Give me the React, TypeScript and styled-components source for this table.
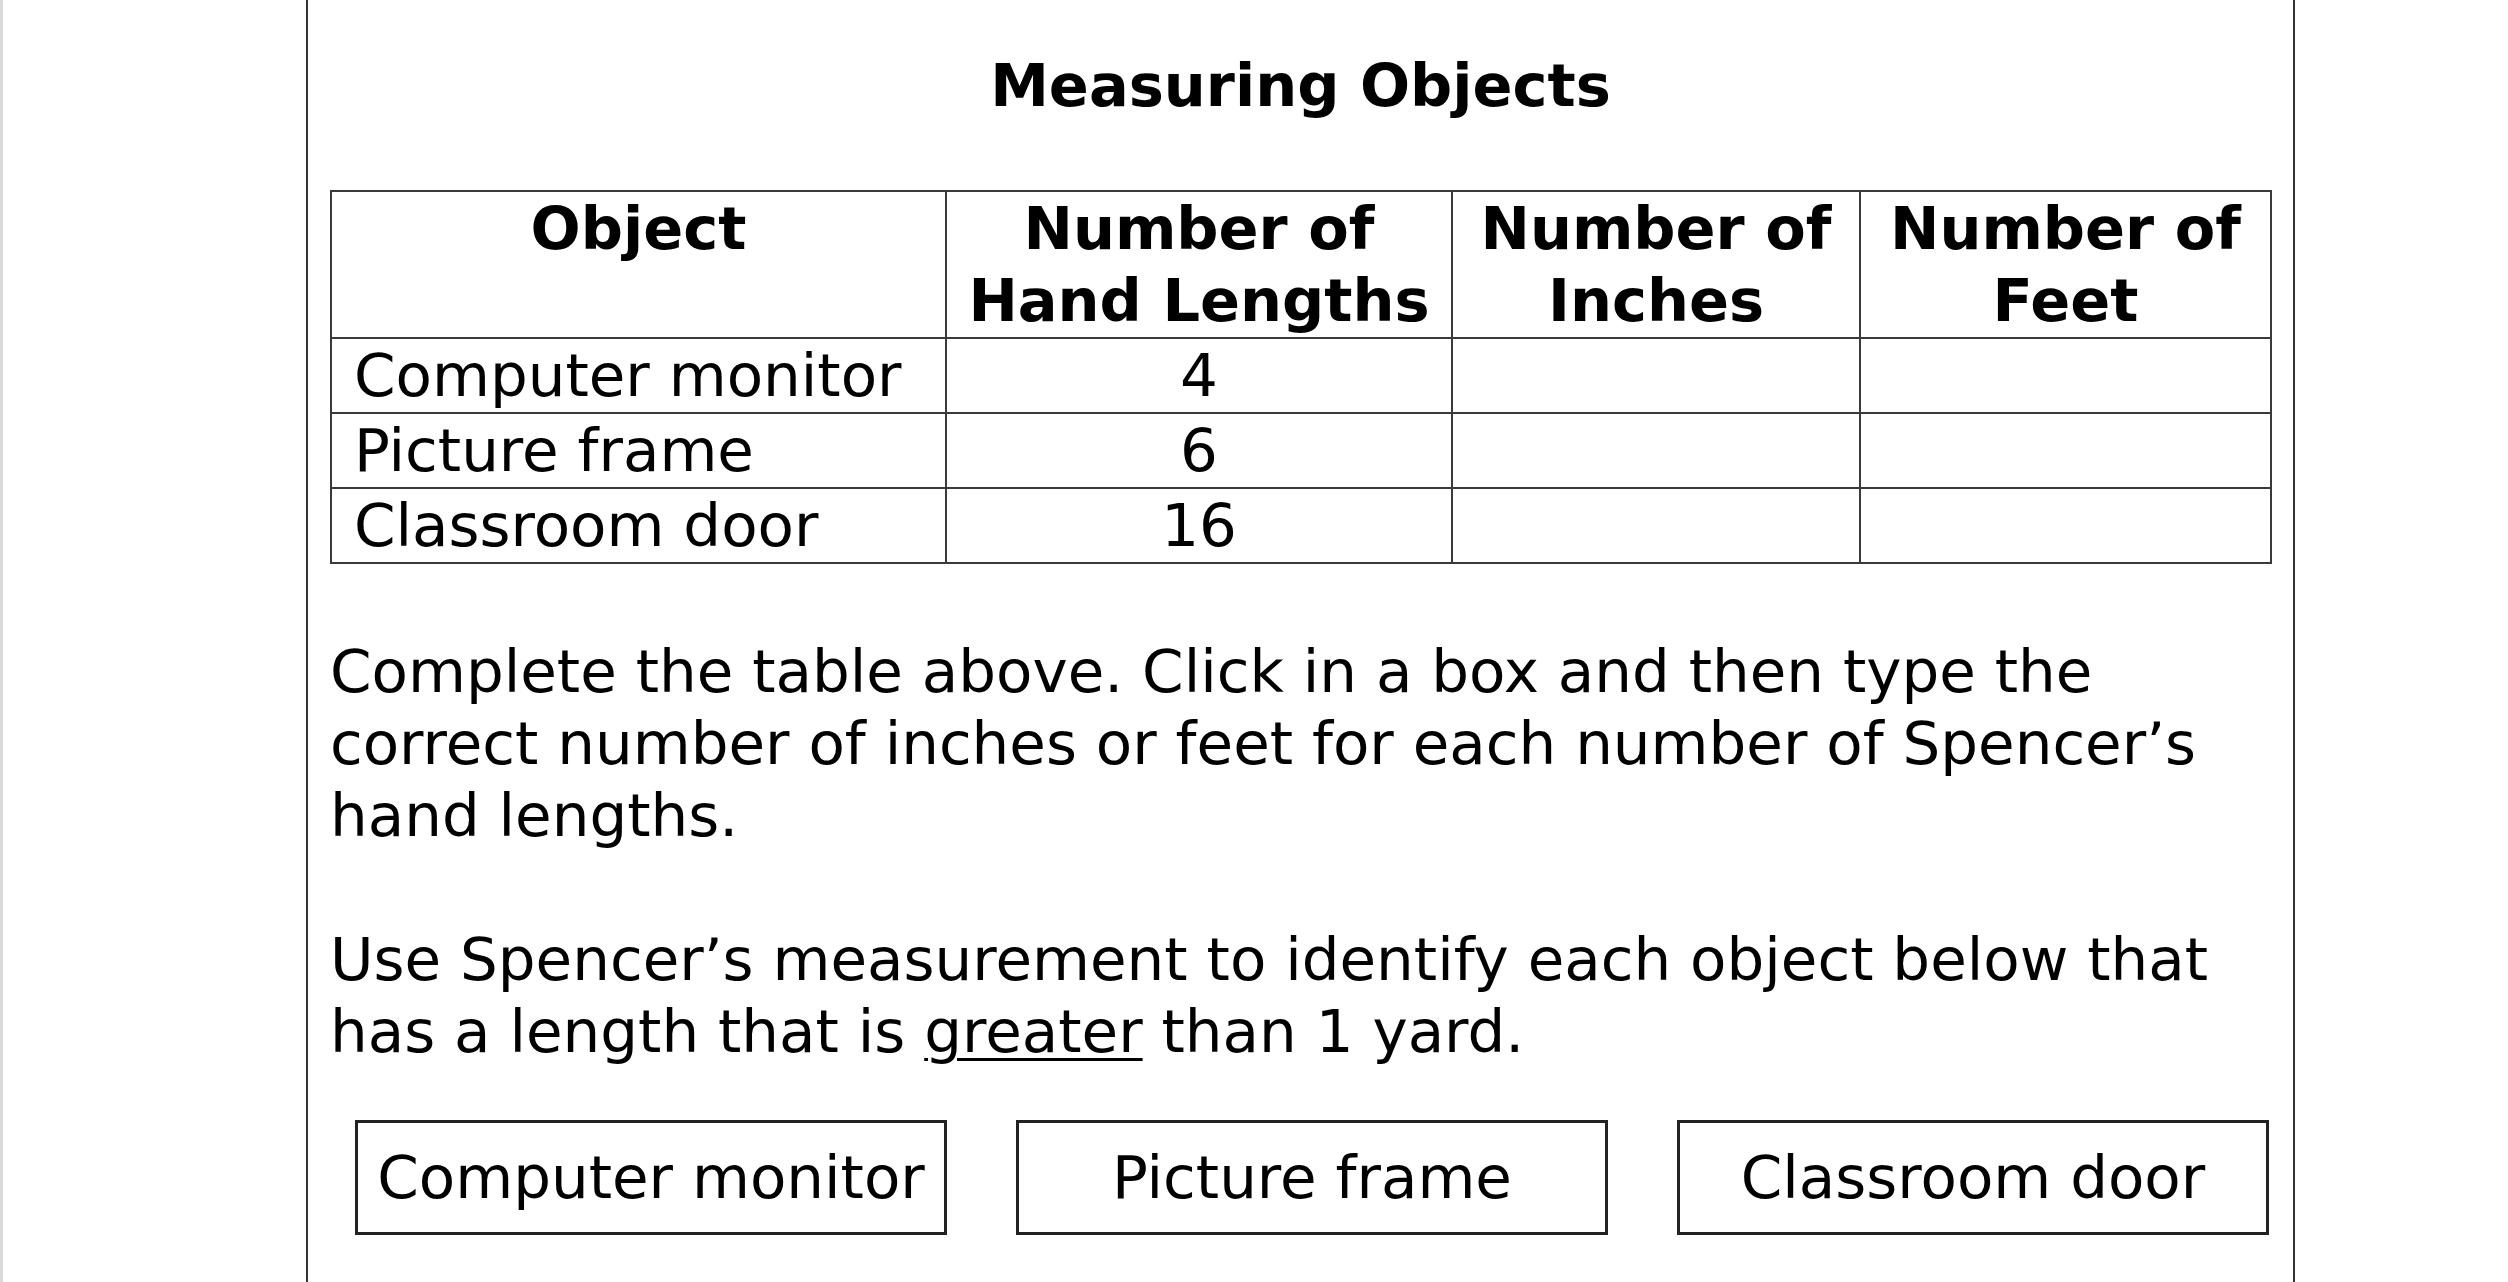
import React from 'react';
import styled, { createGlobalStyle } from 'styled-components';

const GlobalStyle = createGlobalStyle`
  html, body {
    margin: 0;
    padding: 0;
    background: #fff;
  }
  body {
    font-family: "DejaVu Sans", Verdana, sans-serif;
    color: #000;
  }
`;

// page frame: light strip on the far left, bordered panel in the middle
const Page = styled.div`
  display: flex;
  min-height: 1282px;
  border-left: 3px solid #dadada;
  box-sizing: border-box;
`;

const Panel = styled.main`
  margin-left: 303px;
  width: 1989px;
  border-left: 2px solid #333;
  border-right: 2px solid #333;
  padding: 50px 22px 0 22px;
  box-sizing: border-box;
`;

const Title = styled.h1`
  margin: 0 0 68px 0;
  font-size: 59px;
  line-height: 72px;
  font-weight: bold;
  text-align: center;
`;

const Table = styled.table`
  width: 1940px;
  border-collapse: collapse;
  table-layout: fixed;
  font-size: 59.5px;
  line-height: 72px;
  border: 2px solid #3a3a3a;
`;

const HeadCell = styled.th`
  border: 2px solid #3a3a3a;
  padding: 1px 0 0;
  font-size: 59px;
  font-weight: bold;
  text-align: center;
  vertical-align: top;
`;

const Cell = styled.td<{ $center?: boolean }>`
  border: 2px solid #3a3a3a;
  padding: 1px ${(p) => (p.$center ? '0' : '22px')} 0;
  text-align: ${(p) => (p.$center ? 'center' : 'left')};
  white-space: nowrap;
`;

const Para = styled.p<{ $top: number }>`
  margin: ${(p) => p.$top}px 0 0 0;
  font-size: 59.5px;
  line-height: 72px;
`;

const Under = styled.span`
  text-decoration: underline;
  text-decoration-thickness: 3px;
  text-underline-offset: 6px;
`;

const Choices = styled.div`
  display: flex;
  gap: 69px;
  margin: 52px 0 0 25px;
`;

const Choice = styled.button`
  width: 592px;
  height: 115px;
  box-sizing: border-box;
  border: 3px solid #222;
  background: #fff;
  font-family: "DejaVu Sans", Verdana, sans-serif;
  font-size: 59.5px;
  color: #000;
  padding: 0;
  display: flex;
  align-items: center;
  justify-content: center;
  white-space: nowrap;
  cursor: pointer;
`;

const rows = [
  { name: 'Computer monitor', hands: '4' },
  { name: 'Picture frame', hands: '6' },
  { name: 'Classroom door', hands: '16' },
];

const App: React.FC = () => {
  return (
    <>
      <GlobalStyle />
      <Page>
        <Panel>
          <Title>Measuring Objects</Title>
          <Table>
            <colgroup>
              <col style={{ width: 615 }} />
              <col style={{ width: 506 }} />
              <col style={{ width: 408 }} />
              <col style={{ width: 411 }} />
            </colgroup>
            <thead>
              <tr>
                <HeadCell>Object</HeadCell>
                <HeadCell>
                  Number of
                  <br />
                  Hand Lengths
                </HeadCell>
                <HeadCell>
                  Number of
                  <br />
                  Inches
                </HeadCell>
                <HeadCell>
                  Number of
                  <br />
                  Feet
                </HeadCell>
              </tr>
            </thead>
            <tbody>
              {rows.map((r) => (
                <tr key={r.name}>
                  <Cell>{r.name}</Cell>
                  <Cell $center>{r.hands}</Cell>
                  <Cell />
                  <Cell />
                </tr>
              ))}
            </tbody>
          </Table>
          <Para $top={72}>
            Complete the table above. Click in a box and then type the correct number of
            inches or feet for each number of Spencer’s hand lengths.
          </Para>
          <Para $top={72}>
            Use Spencer’s measurement to identify each object below that has a length that
            is <Under>greater</Under> than 1 yard.
          </Para>
          <Choices>
            {rows.map((r) => (
              <Choice key={r.name}>{r.name}</Choice>
            ))}
          </Choices>
        </Panel>
      </Page>
    </>
  );
};

export default App;
